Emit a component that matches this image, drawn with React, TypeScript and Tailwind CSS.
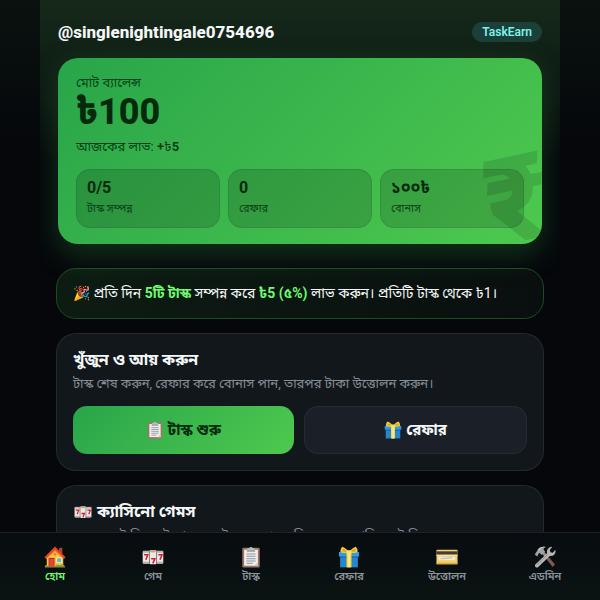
import React from 'react';

type IconProps = { className?: string };

const HomeIcon: React.FC<IconProps> = ({ className }) => (
  <svg viewBox="0 0 24 24" className={className} aria-hidden="true">
    <path d="M16.500 2h3.500v7h-3.500z" fill="#b5402f" />
    <path d="M3 11.500 12 3l9 8.500V22.500H3z" fill="#fbc23c" />
    <path d="M12 .5 23.500 12.200l-1.500 1.800L12 4.600 2 14 .5 12.200z" fill="#e5442e" />
    <path d="M12 4.600 22 14h-1.500L12 6 3.500 14H2z" fill="#f58a2a" />
    <path d="M5 13h6.500v9.500H5z" fill="#b92b28" />
    <path d="M6 14h4.500v8.500H6z" fill="#e04a35" />
    <path d="M13.500 12.500h6v6h-6z" fill="#fff3d0" />
    <path d="M14.300 13.300h4.400v4.400h-4.400z" fill="#6db5c9" />
    <circle cx="12" cy="9" r="1.500" fill="#d98a20" />
    <path d="M1 21.500c1-1.200 2-1.200 3.300 0V23H1zM12.500 21.300c1.500-1.400 3-1.300 4.300-.3 1.500-1.200 4.500-1 5.700.5V23h-10z" fill="#7cab35" />
    <path d="M1 22.300h22v1.200H1z" fill="#8b7a50" />
  </svg>
);

const SlotsIcon: React.FC<IconProps> = ({ className }) => (
  <svg viewBox="0 0 24 24" className={className} aria-hidden="true">
    <rect x="0.500" y="5" width="23" height="14.500" rx="1.500" fill="#6f6767" />
    <rect x="1" y="5.500" width="6.600" height="13.500" rx="1" fill="#ece7e5" />
    <rect x="8.500" y="4.500" width="7" height="15.500" rx="1" fill="#ece7e5" />
    <rect x="16.400" y="5.500" width="6.600" height="13.500" rx="1" fill="#ece7e5" />
    <path d="M1 5.500h6.600v1.800H1zM8.500 4.500h7v2h-7zM16.400 5.500H23v1.800h-6.600zM1 17.200h6.600V19H1zM16.400 17.200H23V19h-6.600z" fill="#b9b0ae" />
    <path d="M10 5h4v2h-4z" fill="#e3a04e" />
    <path d="M2.300 9.500h4L4.200 15M10 14h4l-2.200 5M17.800 9.500h4L19.700 15" fill="none" stroke="#c9232e" strokeWidth="1.700" />
  </svg>
);

const ClipboardIcon: React.FC<IconProps> = ({ className }) => (
  <svg viewBox="0 0 24 24" className={className} aria-hidden="true">
    <rect x="2.500" y="2" width="19" height="21.500" rx="1.500" fill="#9b7565" />
    <path d="M4.500 4h15v17.500h-15z" fill="#f0eeec" />
    <path d="M15.500 21.500h4v-4z" fill="#cfc9c5" />
    <path d="M8 2.500h2.200a1.900 1.900 0 0 1 3.600 0H16v3H8z" fill="#b9bec2" />
    <path d="M7.500 4.800h9v1.400h-9z" fill="#8b9297" />
    <path d="M7 8.800h10M7 11.300h10M7 13.800h10M7 16.300h10M7 18.800h7" stroke="#8d949b" strokeWidth="1.100" />
  </svg>
);

const GiftIcon: React.FC<IconProps> = ({ className }) => (
  <svg viewBox="0 0 24 24" className={className} aria-hidden="true">
    <path d="M2.300 10h19.400v13.300H2.300z" fill="#2386cf" />
    <path d="M1 6.500h22v5H1z" fill="#319be4" />
    <path d="M2.300 11.500h19.400v1.300H2.300z" fill="#1769ac" />
    <path d="M9.300 6h5.400v17.300H9.300z" fill="#f8d84a" />
    <path d="M11 7.500h2v15.800h-2z" fill="#fdeb83" />
    <path d="M12 7.200C9 7.800 5 8 2.800 6.800 2.200 4 3.500 1.800 4.700.8 7.500 2 10.500 4 12 7.200z" fill="#f7cf35" />
    <path d="M12 7.200c3 .6 7 .8 9.200-.4.6-2.800-.7-5-1.900-6C16.500 2 13.500 4 12 7.200z" fill="#f7cf35" />
    <path d="M10 6C8 6.400 5.500 6.300 4.600 5.700 4.400 4.500 5 3.300 5.400 3 7.500 3.900 9 4.800 10 6zM14 6c2 .4 4.500.3 5.400-.3.200-1.200-.4-2.400-.8-2.700C16.500 3.900 15 4.800 14 6z" fill="#d9a42a" />
    <rect x="9.500" y="4.600" width="5" height="3.800" rx="1" fill="#fbe36a" />
  </svg>
);

const CardIcon: React.FC<IconProps> = ({ className }) => (
  <svg viewBox="0 0 24 24" className={className} aria-hidden="true">
    <rect x="0.500" y="4" width="23" height="16" rx="1" fill="#f4d06c" />
    <path d="M.5 5.800h23v3.700H.5z" fill="#423d38" />
    <path d="M.5 9.500h23v1.200H.5z" fill="#fae49c" />
    <path d="M2.500 11.800h18.500v3.600H2.500z" fill="#eeeae0" />
    <path d="M5 14.200c1.500-2 2 .8 3.300-.6s1.700.7 3-.2 1.800.6 3-.4 1.800.7 3.200-.5" fill="none" stroke="#8c8c8c" strokeWidth=".7" />
    <path d="M.5 18.300h23V19a1 1 0 0 1-1 1h-21a1 1 0 0 1-1-1z" fill="#dba93e" />
  </svg>
);

const ToolsIcon: React.FC<IconProps> = ({ className }) => (
  <svg viewBox="0 0 24 24" className={className} aria-hidden="true">
    <path d="m9 8.500 2.200-2L23 20.300 20.300 23z" fill="#81574e" />
    <path d="m9 8.500 2.200-2 4 4.700-2.500 2.200z" fill="#8f8c8b" />
    <path d="M.8 9.300 4.200 4C6.300 1.200 9.500.3 13 1.200c-2 .8-2.700 1.600-2.500 3l1.700 2.200-3.700 3.400-2.200-2.200-1.200.5L3.500 11.500z" fill="#9fa1a3" />
    <path d="M4.200 4C6.300 1.200 9.500.3 13 1.200 9.500 1.300 7.200 2.700 5.500 5.300z" fill="#c6c8c9" />
    <path d="M1.400 20.200 14.300 7.800c-.7-3 .8-6 4.300-6.900l1.200.2-2.600 3.300.8 2.500 2.600.5 2.600-3.200c1.200 4-2 7.500-6 6.600L4.300 23.200c-2.300.8-4-1-2.900-3z" fill="#b4b6b8" />
    <path d="m3 20.700 12-11.500" stroke="#85888a" strokeWidth=".9" />
  </svg>
);

const stats = [
  { value: '0/5', label: 'টাস্ক সম্পন্ন' },
  { value: '0', label: 'রেফার' },
  { value: '১০০৳', label: 'বোনাস' },
];

const navItems = [
  { Icon: HomeIcon, label: 'হোম', active: true },
  { Icon: SlotsIcon, label: 'গেম' },
  { Icon: ClipboardIcon, label: 'টাস্ক' },
  { Icon: GiftIcon, label: 'রেফার' },
  { Icon: CardIcon, label: 'উত্তোলন' },
  { Icon: ToolsIcon, label: 'এডমিন' },
];

export default function App() {
  return (
    <div className="h-screen overflow-hidden bg-[#05070b] bg-linear-to-b from-[#0a120f] to-[#05070b] to-25% font-[Roboto,'Noto_Sans_Bengali','Noto_Sans',sans-serif] text-[#f4f7f8]">
      <div className="mx-auto max-w-[520px] overflow-hidden">
        {/* Header + balance */}
        <header className="bg-linear-to-b from-[#15291a] to-transparent to-60% px-[18px] pt-5 pb-6">
          <div className="flex items-center justify-between pb-[14px]">
            <h1 className="text-[17px] font-extrabold leading-6">@singlenightingale0754696</h1>
            <span className="rounded-full bg-[#1c4038] px-[10px] text-xs font-semibold leading-5 text-[#7df3ee]">TaskEarn</span>
          </div>
          <div className="relative overflow-hidden rounded-[20px] bg-linear-135 from-[#28a54a] to-[#4ec94e] px-[18px] py-4 text-[#04290b] shadow-[0_10px_30px_rgba(60,190,80,0.25)]">
            <p className="text-[13px] leading-[18px] opacity-80">মোট ব্যালেন্স</p>
            <p className="text-4xl font-extrabold leading-10">৳100</p>
            <p className="mt-1 text-[13px] leading-[21px] text-[#04290b]/85">আজকের লাভ: <b>+</b>৳<b>5</b></p>
            <div className="mt-3 grid grid-cols-3 gap-2">
              {stats.map((s) => (
                <div key={s.label} className="rounded-[14px] border border-black/10 bg-black/15 px-[10px] py-2">
                  <p className="text-base font-bold leading-5">{s.value}</p>
                  <p className="text-[11px] leading-[21px] opacity-80">{s.label}</p>
                </div>
              ))}
            </div>
            <span className="absolute -right-2 -bottom-4 -rotate-12 text-[120px] font-black leading-none text-black/12">₹</span>
          </div>
        </header>

        <main className="flex flex-col gap-[14px] px-4">
          <section className="rounded-[20px] border border-[#1e4a26] bg-linear-to-r from-[#0d1c12] to-[#090f0f] p-4 text-sm leading-[17px]">
            🎉 প্রতি দিন <b className="text-[#6dfc6d]">5টি টাস্ক</b> সম্পন্ন করে <b className="text-[#6dfc6d]">৳5 (৫%)</b> লাভ করুন। প্রতিটি টাস্ক থেকে ৳1।
          </section>

          <section className="rounded-[20px] border border-white/8 bg-[#12171c] p-4">
            <h2 className="text-base font-bold leading-5">খুঁজুন ও আয় করুন</h2>
            <p className="mt-1 text-[13px] leading-5 text-[#858d94]">টাস্ক শেষ করুন, রেফার করে বোনাস পান, তারপর টাকা উত্তোলন করুন।</p>
            <div className="mt-3 flex gap-[10px]">
              <button className="flex h-12 flex-1 items-center justify-center gap-1 rounded-[14px] bg-linear-135 from-[#28a54a] to-[#4ec94e] text-[15px] font-bold text-[#04290b]">
                <ClipboardIcon className="size-[18px]" />
                টাস্ক শুরু
              </button>
              <button className="flex h-12 flex-1 items-center justify-center gap-1 rounded-[14px] border border-white/5 bg-[#1b1f28] text-[15px] font-bold">
                <GiftIcon className="size-[18px]" />
                রেফার
              </button>
            </div>
          </section>

          <section className="rounded-[20px] border border-white/8 bg-[#12171c] p-4">
            <h2 className="flex items-center gap-1 text-base font-bold leading-5">
              <span className="w-5">
                <SlotsIcon className="mx-auto size-[18px]" />
              </span>
              ক্যাসিনো গেমস
            </h2>
            <p className="mt-1 text-[13px] leading-5 text-[#858d94]">কয়েন বেট দিন, স্লট খেলুন, বেট করে আরও জিতুন এবং প্রতি বেটে জিতুন।</p>
          </section>
        </main>
      </div>

      {/* Bottom navigation */}
      <nav className="fixed inset-x-0 bottom-0 border-t border-[#1b2228] bg-linear-to-b from-[#080c10] to-[#0a1312] px-[6px] pt-3 pb-4">
        <ul className="grid grid-cols-6">
          {navItems.map(({ Icon, label, active }) => (
            <li key={label}>
              <a
                href="#"
                className={`flex flex-col items-center text-[11px] font-semibold leading-[15px] ${active ? 'text-[#6dfc6d]' : 'text-[#8a9399]'}`}
              >
                <span className="flex h-6 items-center">
                  <Icon className="size-[22px]" />
                </span>
                {label}
              </a>
            </li>
          ))}
        </ul>
      </nav>
    </div>
  );
}
